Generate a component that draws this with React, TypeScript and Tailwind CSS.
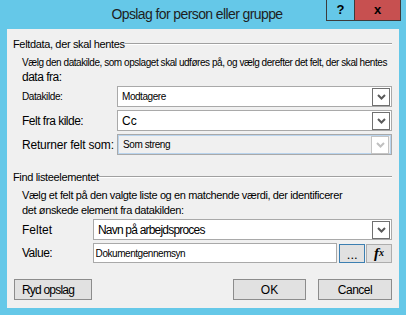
import React from "react";

const Chevron = ({ disabled }: { disabled?: boolean }) => (
  <div
    className={`w-[18px] h-[18px] border flex items-center justify-center bg-white ${
      disabled ? "border-[#c4c4c4]" : "border-[#707070]"
    }`}
  >
    <svg width="9" height="6" viewBox="0 0 9 6">
      <polyline
        points="1,1 4.5,4.5 8,1"
        fill="none"
        stroke={disabled ? "#c0c0c0" : "#5a5a5a"}
        strokeWidth="2"
      />
    </svg>
  </div>
);

const Select = ({
  value,
  textClass,
  disabled,
}: {
  value: string;
  textClass: string;
  disabled?: boolean;
}) => (
  <div
    className={`flex-1 h-full border border-[#a9a9a9] flex items-center ${
      disabled ? "bg-[#f0f0f0]" : "bg-white"
    }`}
  >
    <div
      className={`flex-1 h-full flex items-center justify-between pr-[1px] ${
        disabled ? "border border-[#b9d4ee]" : ""
      }`}
    >
      <span className={`pl-[4px] text-black whitespace-nowrap ${textClass}`}>{value}</span>
      <Chevron disabled={disabled} />
    </div>
  </div>
);

const GroupHeader = ({ title }: { title: string }) => (
  <div className="flex items-start h-[14px] pl-[6px] pr-[7px]">
    <span className="text-[11px] tracking-[-0.35px] leading-[14px] text-black whitespace-nowrap">{title}</span>
    <div className="flex-1 mt-[6px] border-t border-[#a0a0a0] border-b border-b-white" />
  </div>
);

export default function App() {
  return (
    <div className="w-[406px] h-[315px] bg-[#65c8e8] flex flex-col font-['Liberation_Sans',sans-serif] text-black">
      <div className="h-[29px] relative">
        <div className="absolute left-0 top-[3px] w-[394px] text-center text-[14px] tracking-[-0.6px] text-[#1e1e1e] leading-[22px]">
          Opslag for person eller gruppe
        </div>
        <div className="absolute top-0 left-[326px] flex">
          <div className="w-[29px] h-[21px] border-l border-b border-r border-[#3c3c3c] flex items-center justify-center font-bold text-[13px]">
            ?
          </div>
          <div className="w-[46px] h-[21px] border-b border-r border-[#3c3c3c] bg-[#c75050] flex items-center justify-center font-bold text-[13px]">
            x
          </div>
        </div>
      </div>

      <div className="ml-[7px] w-[392px] h-[279px] bg-[#f0f0f0] flex flex-col pt-[8px]">
        <GroupHeader title="Feltdata, der skal hentes" />
        <div className="mt-[5px] pl-[15px] text-[10px] leading-[14px] whitespace-nowrap tracking-[-0.45px]">
          Vælg den datakilde, som opslaget skal udføres på, og vælg derefter det felt, der skal hentes
        </div>
        <div className="pl-[15px] text-[12px] tracking-[-0.5px] leading-[15px]">data fra:</div>

        <div className="mt-[1px] h-[21px] flex items-center pl-[15px] pr-[7px]">
          <span className="w-[95px] text-[10px] tracking-[-0.4px]">Datakilde:</span>
          <Select value="Modtagere" textClass="text-[10px] tracking-[-0.45px]" />
        </div>
        <div className="mt-[3px] h-[21px] flex items-center pl-[15px] pr-[7px]">
          <span className="w-[95px] text-[12px] tracking-[-0.5px]">Felt fra kilde:</span>
          <Select value="Cc" textClass="text-[12px]" />
        </div>
        <div className="mt-[3px] h-[21px] flex items-center pl-[15px] pr-[7px]">
          <span className="w-[95px] text-[12px] whitespace-nowrap tracking-[-0.2px]">Returner felt som:</span>
          <Select value="Som streng" textClass="text-[10px] tracking-[-0.4px]" disabled />
        </div>

        <div className="mt-[15px]">
          <GroupHeader title="Find listeelementet" />
        </div>
        <div className="mt-[4px] pl-[15px] text-[11px] leading-[15px] whitespace-nowrap tracking-[-0.38px]">
          Vælg et felt på den valgte liste og en matchende værdi, der identificerer
        </div>
        <div className="pl-[15px] text-[11px] leading-[15px] tracking-[-0.38px]">
          det ønskede element fra datakilden:
        </div>

        <div className="mt-[1px] h-[21px] flex items-center pl-[15px] pr-[7px]">
          <span className="w-[71px] text-[12px]">Feltet</span>
          <Select value="Navn på arbejdsproces" textClass="text-[12px] tracking-[-0.8px]" />
        </div>
        <div className="mt-[3px] h-[20px] flex items-center pl-[15px] pr-[7px]">
          <span className="w-[71px] text-[12px] tracking-[-0.5px]">Value:</span>
          <div className="w-[246px] h-full bg-white border border-[#a9a9a9] flex items-center pl-[2px] text-[10px] tracking-[-0.45px]">
            Dokumentgennemsyn
          </div>
          <div className="ml-[2px] w-[26px] h-[19px] border border-[#3c7fb1] bg-[#e1e1e1] flex items-center justify-center text-[13px] leading-none pt-[3px]">
            ...
          </div>
          <div className="ml-[1px] w-[26px] h-[19px] border border-[#adadad] bg-[#e1e1e1] flex items-center justify-center font-['Liberation_Serif',serif] italic leading-none">
            <span className="text-[15px] font-bold">f</span>
            <span className="text-[10px] font-bold">x</span>
          </div>
        </div>

        <div className="mt-[16px] h-[21px] flex pl-[7px] pr-[7px]">
          <div className="w-[78px] h-full border border-[#8c8c8c] bg-[#e1e1e1] flex items-center pl-[7px] text-[12px] tracking-[-0.8px]">
            Ryd opslag
          </div>
          <div className="flex-1" />
          <div className="w-[73px] h-full border border-[#8c8c8c] bg-[#e1e1e1] flex items-center justify-center text-[12px]">
            OK
          </div>
          <div className="ml-[12px] w-[74px] h-full border border-[#8c8c8c] bg-[#e1e1e1] flex items-center justify-center text-[12px] tracking-[-0.5px]">
            Cancel
          </div>
        </div>
      </div>
    </div>
  );
}
